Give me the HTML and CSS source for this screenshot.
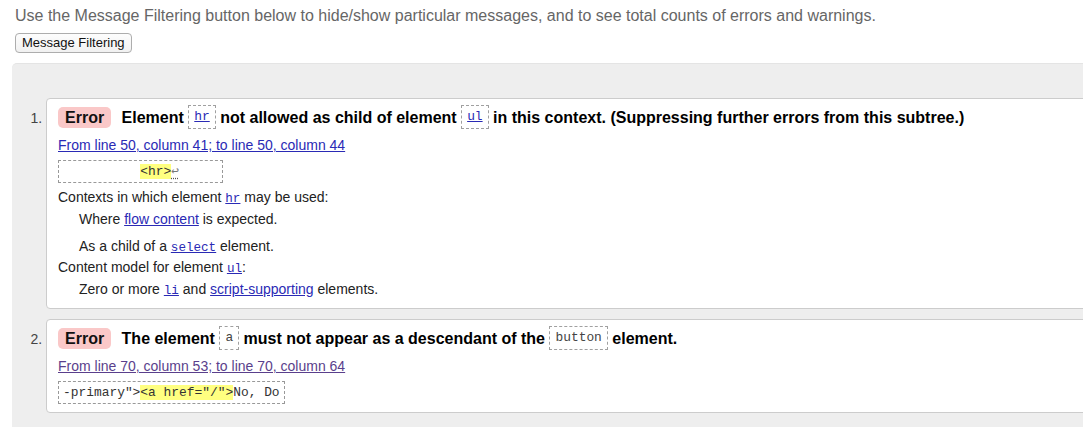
FILE: index.html
```html
<!DOCTYPE html>
<html lang="en">
<head>
<meta charset="utf-8">
<title>Validator messages</title>
<link rel="stylesheet" href="styles.css">
</head>
<body>
<p class="intro">Use the Message Filtering button below to hide/show particular messages, and to see total counts of errors and warnings.</p>
<button class="filter-btn" type="button">Message Filtering</button>
<div class="results">
  <ol class="messages">
    <li class="message">
      <p class="msg-line"><strong class="badge">Error</strong> <span class="msg-text">Element <code class="tag"><a class="tag-link" href="#">hr</a></code> not allowed as child of element <code class="tag"><a class="tag-link" href="#">ul</a></code> in this context. (Suppressing further errors from this subtree.)</span></p>
      <p class="location"><a class="loc-link" href="#">From line 50, column 41; to line 50, column 44</a></p>
      <p class="extract">          <b class="hl">&lt;hr&gt;</b><abbr class="lf" title="Line break">↩</abbr>     </p>
      <dl class="details">
        <dt class="d-title">Contexts in which element <a class="mono-link" href="#">hr</a> may be used:</dt>
        <dd class="d-item">Where <a class="text-link" href="#">flow content</a> is expected.</dd>
        <dd class="d-item d-spaced">As a child of a <a class="mono-link" href="#">select</a> element.</dd>
        <dt class="d-title">Content model for element <a class="mono-link" href="#">ul</a>:</dt>
        <dd class="d-item">Zero or more <a class="mono-link" href="#">li</a> and <a class="text-link" href="#">script-supporting</a> elements.</dd>
      </dl>
    </li>
    <li class="message">
      <p class="msg-line"><strong class="badge">Error</strong> <span class="msg-text">The element <code class="tag tag-plain">a</code> must not appear as a descendant of the <code class="tag tag-plain">button</code> element.</span></p>
      <p class="location"><a class="loc-link visited" href="#">From line 70, column 53; to line 70, column 64</a></p>
      <p class="extract">-primary"&gt;<b class="hl">&lt;a href="/"&gt;</b>No, Do</p>
    </li>
  </ol>
</div>
</body>
</html>
```
FILE: styles.css
```css
html, body {
  margin: 0;
  padding: 0;
  background: #fff;
  overflow: hidden;
}

body {
  font-family: "Liberation Sans", Arial, sans-serif;
  color: #222;
}

.intro {
  margin: 7px 0 0 15px;
  font-size: 16px;
  line-height: 18px;
  color: #666;
}

.filter-btn {
  display: block;
  margin: 8px 0 0 15px;
  padding: 1px 6px;
  font-family: "Liberation Sans", Arial, sans-serif;
  font-size: 13px;
  line-height: 16px;
  color: #111;
  background: linear-gradient(#fdfdfd, #f1f1f1);
  border: 1px solid #adadad;
  border-radius: 4px;
}

.results {
  margin: 10px -40px 0 12px;
  padding: 34px 0 20px 0;
  background: #eee;
  border-radius: 5px 0 0 0;
  border-top: 1px solid #e4e4e4;
}

.messages {
  margin: 0;
  padding: 0 0 0 34px;
  font-size: 14px;
  color: #333;
}

.message {
  background: #fff;
  border: 1px solid #ccc;
  border-radius: 4px;
  padding: 6px 0 8px 11px;
}

.message + .message {
  margin-top: 10px;
}

.message::marker {
  color: #444;
  font-size: 14px;
}

.msg-line {
  margin: 0;
  line-height: 25px;
  font-size: 16px;
  font-weight: bold;
  color: #000;
}

.badge {
  display: inline-block;
  padding: 1px 7px;
  margin-right: 6px;
  line-height: 19px;
  background: #fac8c8;
  border-radius: 5px;
  color: #111;
}

.tag {
  display: inline-block;
  vertical-align: 3px;
  padding: 0 5px;
  line-height: 22px;
  border: 1px dashed #a0a0a0;
  font-family: "Liberation Mono", "Courier New", monospace;
  font-size: 12.9px;
  font-weight: normal;
}

.tag-link {
  color: #2a2ab5;
}

.tag-plain {
  color: #444;
}

.location {
  margin: 7px 0 0 0;
  font-size: 14px;
  line-height: 17px;
}

.loc-link {
  color: #2a2ab5;
}

.loc-link.visited {
  color: #5a3f8c;
}

.extract {
  width: fit-content;
  margin: 6px 0 0 0;
  padding: 0 4px;
  border: 1px dashed #999;
  line-height: 21px;
  font-family: "Liberation Mono", "Courier New", monospace;
  font-size: 12.9px;
  white-space: pre;
  color: #333;
}

.hl {
  font-weight: normal;
  background: #ffff80;
}

.lf {
  color: #777;
  text-decoration: underline dotted #555;
  text-underline-offset: 3px;
}

.details {
  margin: 4px 0 0 0;
  font-size: 14px;
  line-height: 21px;
  color: #222;
}

.d-title {
  margin: 0;
}

.d-item {
  margin: 1px 0 0 21px;
}

.d-item.d-spaced {
  margin-top: 6px;
}

.mono-link {
  font-family: "Liberation Mono", "Courier New", monospace;
  font-size: 12.6px;
  line-height: 1;
  color: #2a2ab5;
}

.text-link {
  color: #2a2ab5;
}
```
